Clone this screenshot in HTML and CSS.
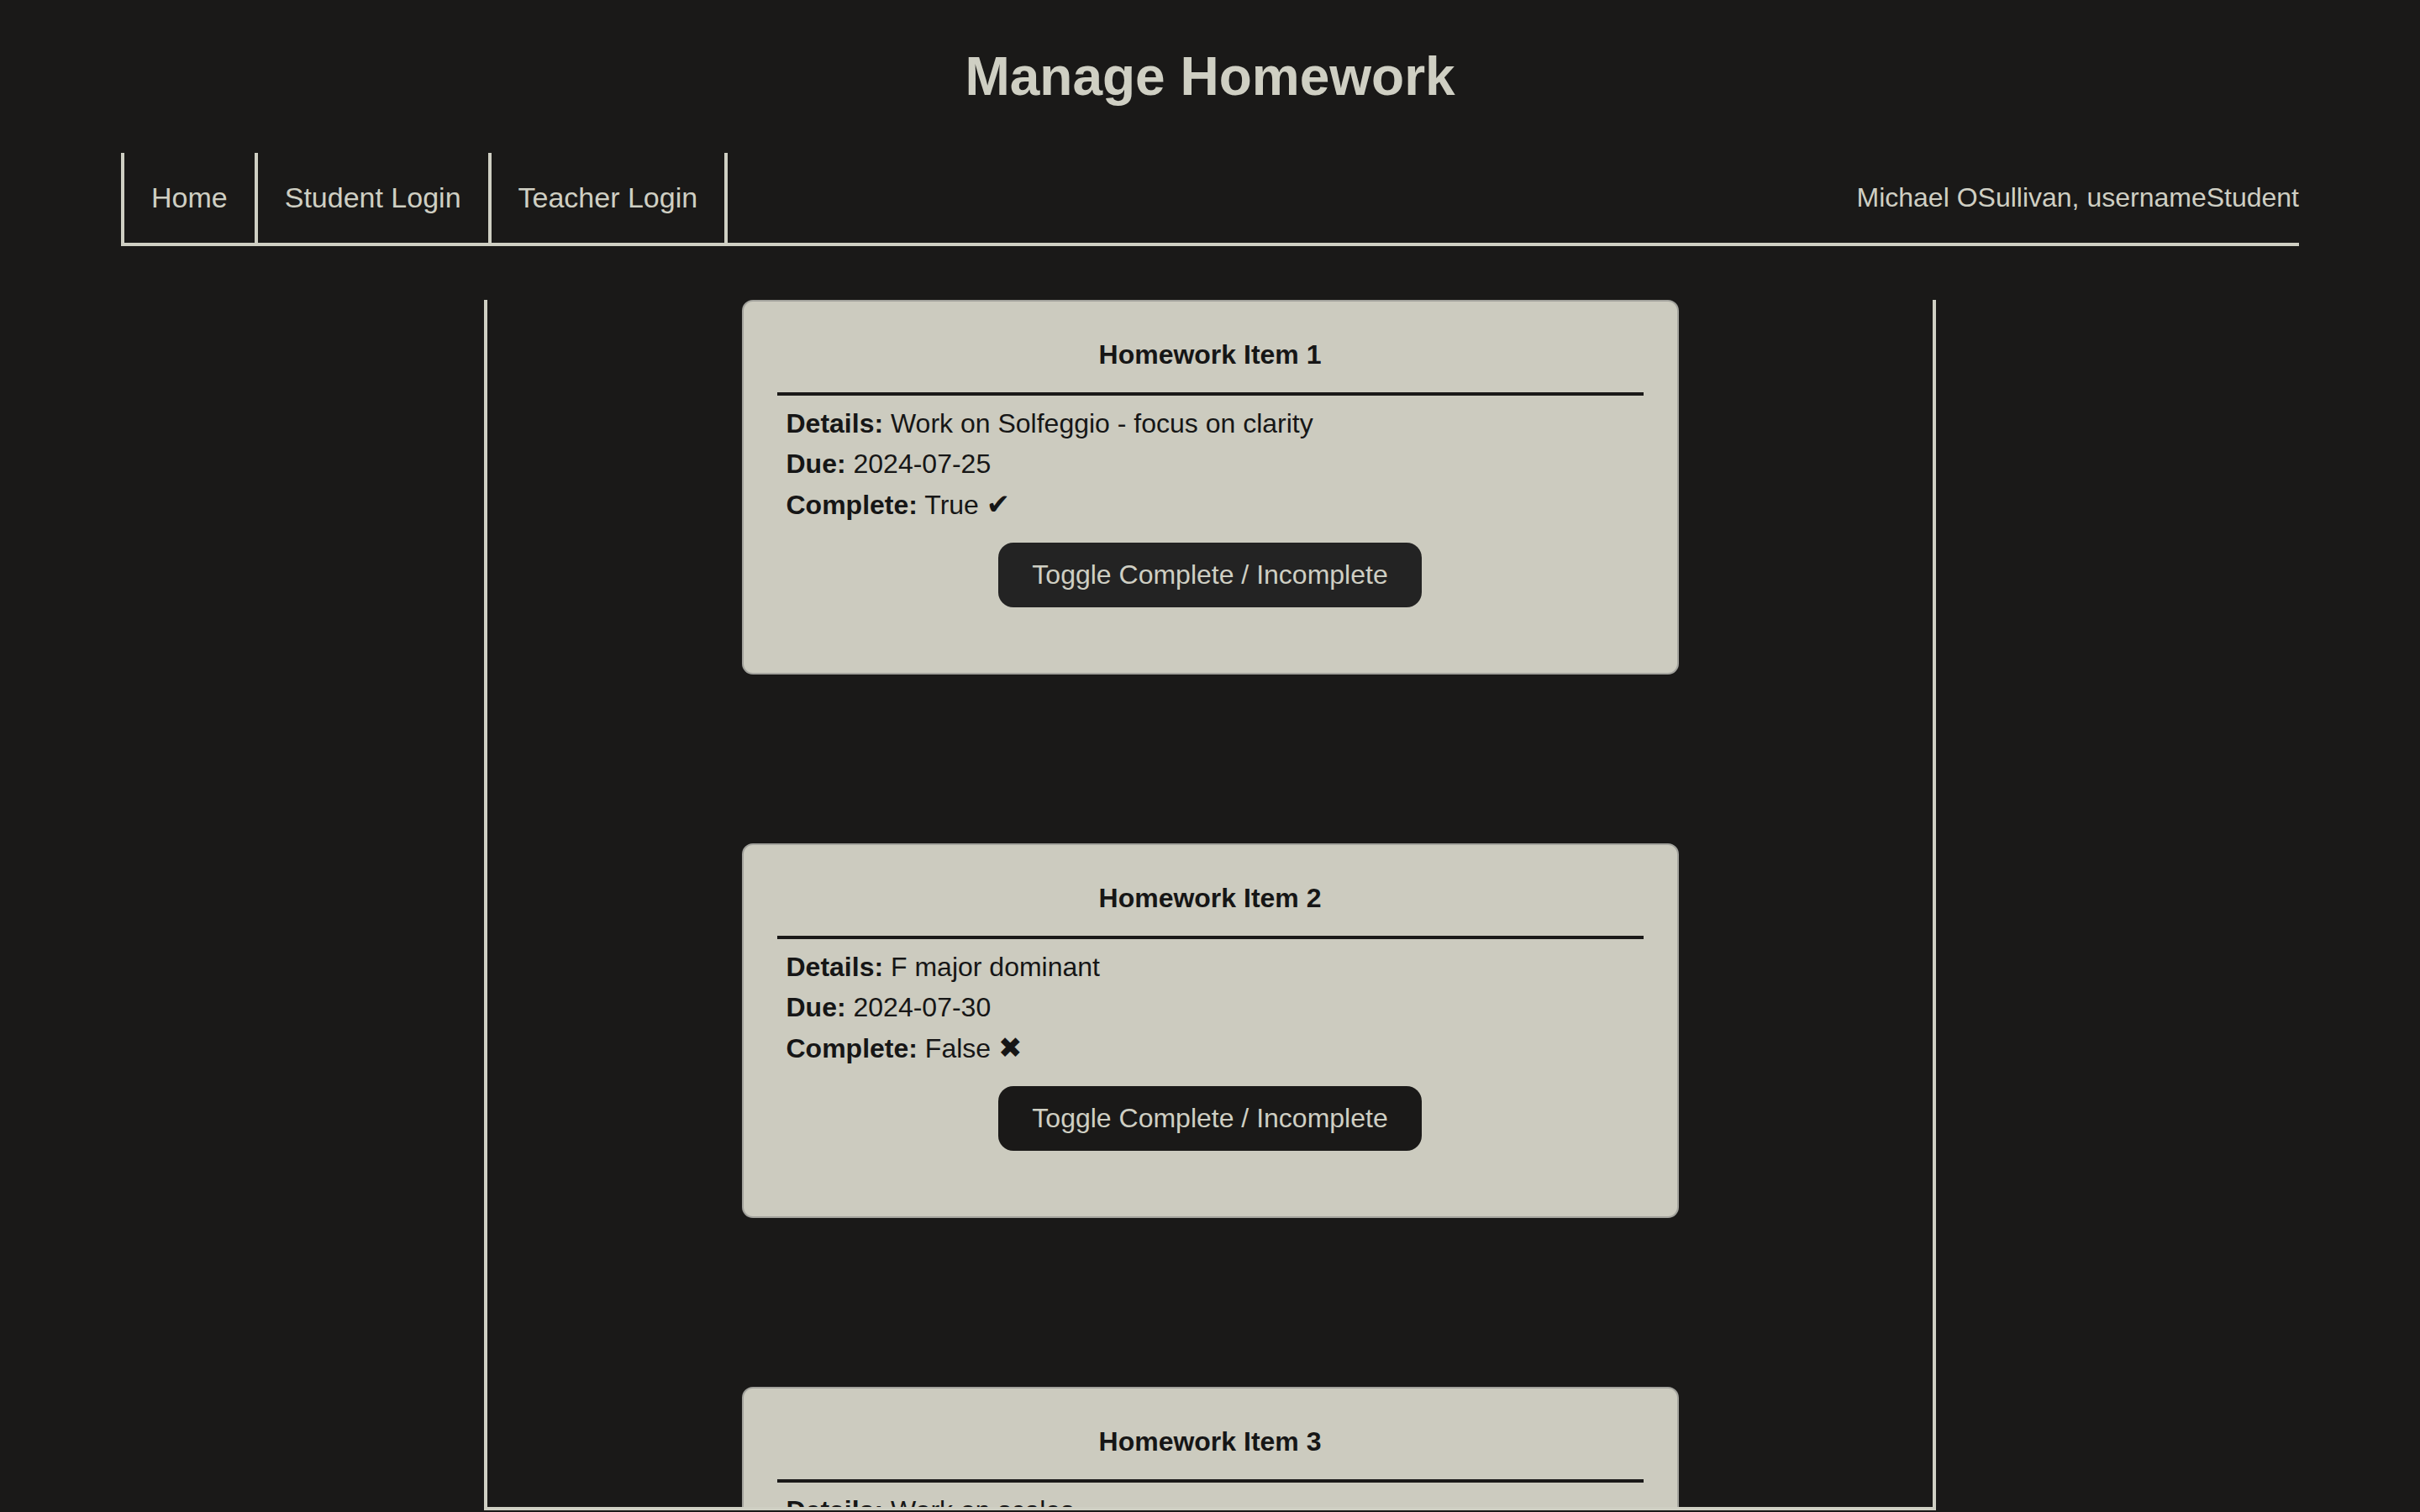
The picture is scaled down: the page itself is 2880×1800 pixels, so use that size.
FILE: index.html
```html
<!DOCTYPE html>
<html lang="en">
<head>
<meta charset="utf-8">
<title>Manage Homework</title>
<link rel="stylesheet" href="styles.css">
</head>
<body>
<h1 class="title">Manage Homework</h1>
<nav class="nav">
  <a class="nav-link" href="#">Home</a>
  <a class="nav-link" href="#">Student Login</a>
  <a class="nav-link" href="#">Teacher Login</a>
  <span class="nav-user">Michael OSullivan, usernameStudent</span>
</nav>
<main class="list">
  <section class="card">
    <h3 class="card-title">Homework Item 1</h3>
    <hr class="card-rule">
    <div class="card-body">
      <div class="row"><b>Details:</b> Work on Solfeggio - focus on clarity</div>
      <div class="row"><b>Due:</b> 2024-07-25</div>
      <div class="row"><b>Complete:</b> True <span class="mark">✔</span></div>
    </div>
    <button class="toggle toggle-hover">Toggle Complete / Incomplete</button>
  </section>
  <section class="card">
    <h3 class="card-title">Homework Item 2</h3>
    <hr class="card-rule">
    <div class="card-body">
      <div class="row"><b>Details:</b> F major dominant</div>
      <div class="row"><b>Due:</b> 2024-07-30</div>
      <div class="row"><b>Complete:</b> False <span class="mark">✖</span></div>
    </div>
    <button class="toggle">Toggle Complete / Incomplete</button>
  </section>
  <section class="card">
    <h3 class="card-title">Homework Item 3</h3>
    <hr class="card-rule">
    <div class="card-body">
      <div class="row"><b>Details:</b> Work on scales</div>
      <div class="row"><b>Due:</b> 2024-08-02</div>
      <div class="row"><b>Complete:</b> False <span class="mark">✖</span></div>
    </div>
    <button class="toggle">Toggle Complete / Incomplete</button>
  </section>
</main>
</body>
</html>
```
FILE: styles.css
```css
html, body {
  margin: 0;
  padding: 0;
  height: 1800px;
  overflow: hidden;
}
body {
  background: #1a1918;
  color: #cfcfc3;
  font-family: "Liberation Sans", Arial, Helvetica, sans-serif;
  font-size: 32px;
}
.title {
  margin: 54px 0 54px;
  text-align: center;
  font-size: 64px;
  font-weight: bold;
  line-height: normal;
  color: #cfcfc3;
}
.nav {
  display: flex;
  align-items: stretch;
  margin: 0 144px;
  border-left: 4px solid #cfcfc3;
  border-bottom: 4px solid #cfcfc3;
  height: 107px;
}
.nav-link {
  display: block;
  padding: 0 32px;
  border-right: 4px solid #cfcfc3;
  color: #cfcfc3;
  text-decoration: none;
  font-size: 34px;
  line-height: 107px;
}
.nav-user {
  margin-left: auto;
  line-height: 107px;
  font-size: 32px;
  color: #cfcfc3;
}
.list {
  box-sizing: border-box;
  width: 1728px;
  height: 1441px;
  margin: 64px auto 0;
  border: 4px solid #cfcfc3;
  border-top: none;
  overflow: hidden;
  display: flex;
  flex-direction: column;
  align-items: center;
}
.card {
  box-sizing: border-box;
  flex: none;
  width: 1115px;
  height: 446px;
  margin-bottom: 201px;
  padding: 45px 40px 78px;
  background: #cccbbf;
  border: 2px solid #a3a39d;
  border-radius: 13px;
  color: #161616;
  display: flex;
  flex-direction: column;
}
.card-title {
  margin: 0;
  font-size: 32px;
  font-weight: bold;
  line-height: 37px;
  text-align: center;
}
.card-rule {
  margin: 26px 0 0;
  height: 4px;
  border: none;
  background: #1a1918;
}
.card-body {
  margin-top: 9px;
  padding: 0 11px;
}
.row {
  line-height: 48px;
  white-space: nowrap;
}
.mark {
  font-family: "DejaVu Sans", sans-serif;
  font-size: 34px;
}
.toggle {
  align-self: center;
  margin-top: 21px;
  padding: 20px 40px;
  border: none;
  border-radius: 18px;
  background: #1a1918;
  color: #cfcfc3;
  font-family: "Liberation Sans", Arial, Helvetica, sans-serif;
  font-size: 32px;
  line-height: 37px;
  cursor: pointer;
}
.toggle-hover {
  background: #232323;
}
```
